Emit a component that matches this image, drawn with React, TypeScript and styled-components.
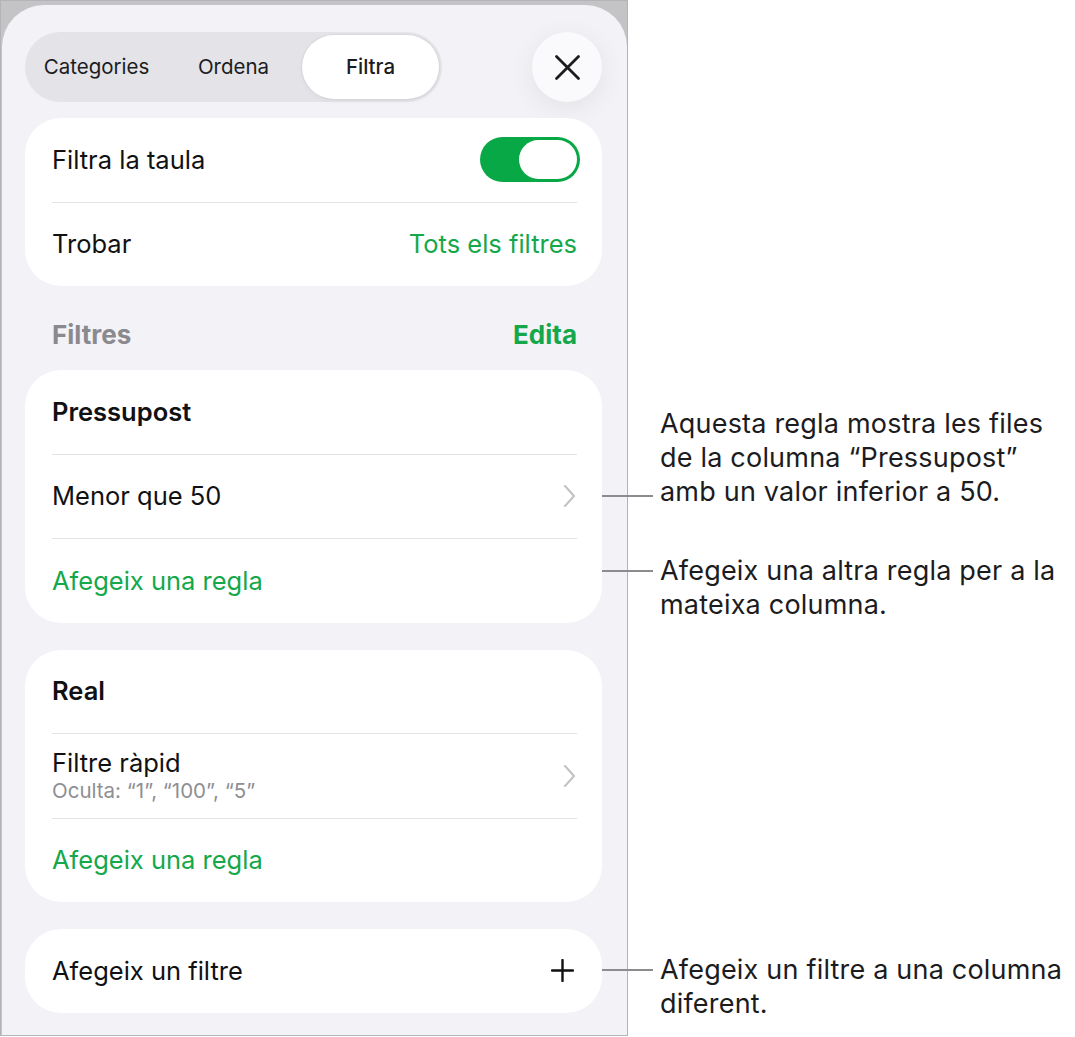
import React from "react";
import styled, { createGlobalStyle, css } from "styled-components";

const GREEN = "#14a84a";

const GlobalStyle = createGlobalStyle`
  html, body {
    margin: 0;
    padding: 0;
    background: #ffffff;
  }
  body {
    font-family: Inter, "Noto Sans", sans-serif;
    color: #111113;
    -webkit-font-smoothing: antialiased;
  }
`;

const Page = styled.div`
  display: flex;
  align-items: flex-start;
  width: 1075px;
  height: 1037px;
  overflow: hidden;
`;

const Frame = styled.div`
  width: 628px;
  height: 1036px;
  flex-shrink: 0;
  box-sizing: border-box;
  border: 1px solid #b4b4b6;
  background: #c4c4c6;
  padding: 4px 0 0 1px;
  display: flex;
`;

const Sheet = styled.div`
  flex: 1;
  background: #f2f2f7;
  border-radius: 42px 42px 0 0;
  padding: 27px 25px 0 23px;
  display: flex;
  flex-direction: column;
`;

const TopBar = styled.div`
  display: flex;
  align-items: center;
  justify-content: space-between;
  margin-bottom: 16px;
`;

const Segmented = styled.div`
  display: flex;
  padding: 3px;
  height: 70px;
  box-sizing: border-box;
  background: #e3e3e8;
  border-radius: 35px;
`;

const Segment = styled.div<{ $active?: boolean }>`
  width: 137px;
  display: flex;
  align-items: center;
  justify-content: center;
  padding-bottom: 1px;
  border-radius: 32px;
  font-size: 20.5px;
  color: #1c1c1e;
  ${(p) =>
    p.$active &&
    css`
      background: #ffffff;
      font-weight: 500;
      box-shadow: 0 0 0 1px rgba(0, 0, 0, 0.04), 0 2px 6px rgba(0, 0, 0, 0.04);
    `}
`;

const CloseButton = styled.div`
  width: 70px;
  height: 70px;
  border-radius: 50%;
  background: #fafafc;
  display: flex;
  align-items: center;
  justify-content: center;
  box-shadow: 0 6px 28px rgba(0, 0, 0, 0.07);
`;

const Card = styled.div<{ $gap?: number }>`
  background: #ffffff;
  border-radius: 36px;
  padding: 0 25px 0 27px;
  margin-top: ${(p) => p.$gap ?? 0}px;
`;

const Row = styled.div`
  min-height: 83.5px;
  display: flex;
  align-items: center;
  justify-content: space-between;

  & + & {
    border-top: 1px solid #e2e2e7;
  }
`;

type Tone = "primary" | "green" | "gray";

const toneColor: Record<Tone, string> = {
  primary: "#111113",
  green: GREEN,
  gray: "#8a8a8e",
};

const Label = styled.span<{ $tone?: Tone; $weight?: number }>`
  font-size: 25.5px;
  line-height: 30px;
  font-weight: ${(p) => p.$weight ?? 400};
  color: ${(p) => toneColor[p.$tone ?? "primary"]};
`;

const Stack = styled.div`
  display: flex;
  flex-direction: column;
`;

const Caption = styled.span`
  font-size: 20.5px;
  line-height: 26px;
  color: #8e8e93;
`;

const Toggle = styled.div<{ $on?: boolean }>`
  width: 100px;
  height: 45px;
  box-sizing: border-box;
  padding: 3px;
  border-radius: 23px;
  background: ${(p) => (p.$on ? "#08a846" : "#e5e5ea")};
  display: flex;
  justify-content: ${(p) => (p.$on ? "flex-end" : "flex-start")};
  margin-right: -3px;
`;

const Knob = styled.div`
  width: 58px;
  height: 39px;
  border-radius: 20px;
  background: #ffffff;
`;

const SectionHeader = styled.div`
  display: flex;
  justify-content: space-between;
  padding: 35px 25px 21px 27px;
  font-size: 26px;
  line-height: 28px;
  font-weight: 700;
`;

const IconSlot = styled.div<{ $inset?: number }>`
  display: flex;
  align-items: center;
  margin-right: ${(p) => p.$inset ?? 0}px;
`;

const Callouts = styled.div`
  display: flex;
  flex-direction: column;
  margin-left: -26px;
  position: relative;
  z-index: 1;
`;

const Callout = styled.div<{ $top: number }>`
  display: flex;
  align-items: flex-start;
  margin-top: ${(p) => p.$top}px;
`;

const Leader = styled.div<{ $offset: number }>`
  width: 51px;
  height: 2px;
  background: #8c8c8e;
  flex-shrink: 0;
  margin-top: ${(p) => p.$offset - 1}px;
  margin-right: 7px;
`;

const CalloutText = styled.div`
  font-size: 27px;
  line-height: 34px;
  color: #1c1c1e;
  white-space: nowrap;
  letter-spacing: 0.2px;
`;

const CloseIcon = () => (
  <svg width="27" height="27" viewBox="0 0 27 27">
    <path
      d="M2.5 2.5 L24.5 24.5 M24.5 2.5 L2.5 24.5"
      stroke="#1c1c1e"
      strokeWidth="2.8"
      strokeLinecap="round"
      fill="none"
    />
  </svg>
);

const Chevron = () => (
  <svg width="13" height="24" viewBox="0 0 13 24">
    <path
      d="M2 2 L11 12 L2 22"
      stroke="#c4c4c7"
      strokeWidth="2.2"
      strokeLinecap="round"
      strokeLinejoin="round"
      fill="none"
    />
  </svg>
);

const PlusIcon = () => (
  <svg width="23" height="23" viewBox="0 0 23 23">
    <path
      d="M11.5 1 V22 M1 11.5 H22"
      stroke="#111113"
      strokeWidth="2.4"
      strokeLinecap="round"
      fill="none"
    />
  </svg>
);

const App = () => {
  return (
    <>
      <GlobalStyle />
      <Page>
        <Frame>
          <Sheet>
            <TopBar>
              <Segmented>
                <Segment>Categories</Segment>
                <Segment>Ordena</Segment>
                <Segment $active>Filtra</Segment>
              </Segmented>
              <CloseButton>
                <CloseIcon />
              </CloseButton>
            </TopBar>

            <Card>
              <Row>
                <Label>Filtra la taula</Label>
                <Toggle $on>
                  <Knob />
                </Toggle>
              </Row>
              <Row>
                <Label>Trobar</Label>
                <Label $tone="green">Tots els filtres</Label>
              </Row>
            </Card>

            <SectionHeader>
              <span style={{ color: "#8a8a8e" }}>Filtres</span>
              <span style={{ color: GREEN }}>Edita</span>
            </SectionHeader>

            <Card>
              <Row>
                <Label $weight={600}>Pressupost</Label>
              </Row>
              <Row>
                <Label>Menor que 50</Label>
                <IconSlot $inset={1}>
                  <Chevron />
                </IconSlot>
              </Row>
              <Row>
                <Label $tone="green">Afegeix una regla</Label>
              </Row>
            </Card>

            <Card $gap={27}>
              <Row>
                <Label $weight={600}>Real</Label>
              </Row>
              <Row>
                <Stack>
                  <Label>Filtre ràpid</Label>
                  <Caption>Oculta: “1”, “100”, “5”</Caption>
                </Stack>
                <IconSlot $inset={1}>
                  <Chevron />
                </IconSlot>
              </Row>
              <Row>
                <Label $tone="green">Afegeix una regla</Label>
              </Row>
            </Card>

            <Card $gap={27}>
              <Row>
                <Label>Afegeix un filtre</Label>
                <IconSlot $inset={3}>
                  <PlusIcon />
                </IconSlot>
              </Row>
            </Card>
          </Sheet>
        </Frame>

        <Callouts>
          <Callout $top={407}>
            <Leader $offset={89} />
            <CalloutText>
              Aquesta regla mostra les files
              <br />
              de la columna “Pressupost”
              <br />
              amb un valor inferior a 50.
            </CalloutText>
          </Callout>
          <Callout $top={45}>
            <Leader $offset={17} />
            <CalloutText>
              Afegeix una altra regla per a la
              <br />
              mateixa columna.
            </CalloutText>
          </Callout>
          <Callout $top={331}>
            <Leader $offset={17} />
            <CalloutText>
              Afegeix un filtre a una columna
              <br />
              diferent.
            </CalloutText>
          </Callout>
        </Callouts>
      </Page>
    </>
  );
};

export default App;
